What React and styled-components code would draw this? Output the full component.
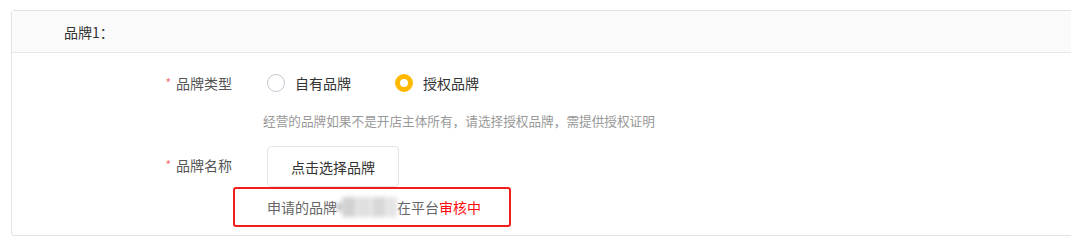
import React from "react";
import styled, { createGlobalStyle } from "styled-components";

const Global = createGlobalStyle`
  html, body { margin: 0; padding: 0; background: #fff; overflow: hidden; }
  body { font-family: "Noto Sans CJK SC", "Noto Sans", sans-serif; }
`;

const Page = styled.div`
  padding: 10px 0 0 11px;
  width: 1071px;
  box-sizing: border-box;
`;

const Card = styled.div`
  width: 1080px;
  border: 1px solid #e2e2e2;
  border-radius: 3px;
  box-sizing: border-box;
  background: #fff;
`;

const Header = styled.div`
  height: 41px;
  background: #fafafa;
  border-bottom: 1px solid #e8e8e8;
  display: flex;
  align-items: center;
  padding-left: 52px;
  font-size: 14px;
  color: #333;
`;

const Body = styled.div`
  padding: 20px 0 8px;
  display: flex;
  flex-direction: column;
`;

const FormItem = styled.div`
  display: flex;
  align-items: flex-start;
  margin-top: ${(p) => p.$mt || 0}px;
`;

const Label = styled.div`
  width: 255px;
  box-sizing: border-box;
  padding-right: 35px;
  text-align: right;
  font-size: 14px;
  color: #555;
  line-height: ${(p) => p.$lh || 20}px;
  flex-shrink: 0;
`;

const Star = styled.span`
  color: #f56c6c;
  font-size: 12px;
  margin-right: 5px;
  vertical-align: 1px;
`;

const Content = styled.div`
  display: flex;
  flex-direction: column;
`;

const RadioGroup = styled.div`
  display: flex;
  align-items: center;
  gap: 44px;
  height: 20px;
`;

const RadioItem = styled.label`
  display: flex;
  align-items: center;
  gap: 10px;
  font-size: 14px;
  color: #333;
  line-height: 20px;
  cursor: pointer;
`;

const Circle = styled.span`
  width: 18px;
  height: 18px;
  border-radius: 50%;
  box-sizing: border-box;
  border: ${(p) => (p.$on ? "5px solid #ffb800" : "1px solid #c6c6d2")};
  background: #fff;
  flex-shrink: 0;
`;

const Hint = styled.div`
  margin-top: 19px;
  margin-left: -4px;
  font-size: 12.65px;
  line-height: 18px;
  color: #999;
`;

const PickButton = styled.button`
  height: 41px;
  width: 132px;
  border: 1px solid #e4e4e4;
  border-radius: 4px;
  background: #fff;
  font-family: inherit;
  font-size: 14px;
  color: #333;
  padding: 0;
  cursor: pointer;
`;

const Notice = styled.div`
  margin-left: 221px;
  width: 278px;
  height: 40px;
  border: 2px solid #f41d1d;
  border-radius: 3px;
  box-sizing: border-box;
  display: flex;
  align-items: center;
  padding-left: 32px;
  font-size: 14px;
  color: #666;
`;

const Masked = styled.span`
  display: inline-flex;
  align-items: center;
  width: 60px;
  height: 22px;
  gap: 1px;
  filter: blur(2px);
`;

const Blob = styled.span`
  display: inline-block;
  width: ${(p) => p.$w}px;
  height: ${(p) => p.$h || 20}px;
  background: ${(p) => p.$c || "#dcdcdc"};
`;

const Red = styled.span`
  color: #ff0a0a;
`;

export default function App() {
  return (
    <>
      <Global />
      <Page>
        <Card>
          <Header>品牌1：</Header>
          <Body>
            <FormItem>
              <Label>
                <Star>*</Star>品牌类型
              </Label>
              <Content>
                <RadioGroup>
                  <RadioItem>
                    <Circle />
                    自有品牌
                  </RadioItem>
                  <RadioItem>
                    <Circle $on />
                    授权品牌
                  </RadioItem>
                </RadioGroup>
                <Hint>经营的品牌如果不是开店主体所有，请选择授权品牌，需提供授权证明</Hint>
              </Content>
            </FormItem>
            <FormItem $mt={16}>
              <Label $lh={38}>
                <Star>*</Star>品牌名称
              </Label>
              <Content>
                <PickButton>点击选择品牌</PickButton>
              </Content>
            </FormItem>
            <Notice>
              申请的品牌
              <Masked>
                <Blob $w={4} $h={8} $c="#b8b8b8" />
                <Blob $w={14} $c="#d2d2d2" />
                <Blob $w={14} $c="#e0e0e0" />
                <Blob $w={14} $c="#d8d8d8" />
                <Blob $w={10} $c="#e4e4e4" />
              </Masked>
              在平台<Red>审核中</Red>
            </Notice>
          </Body>
        </Card>
      </Page>
    </>
  );
}
